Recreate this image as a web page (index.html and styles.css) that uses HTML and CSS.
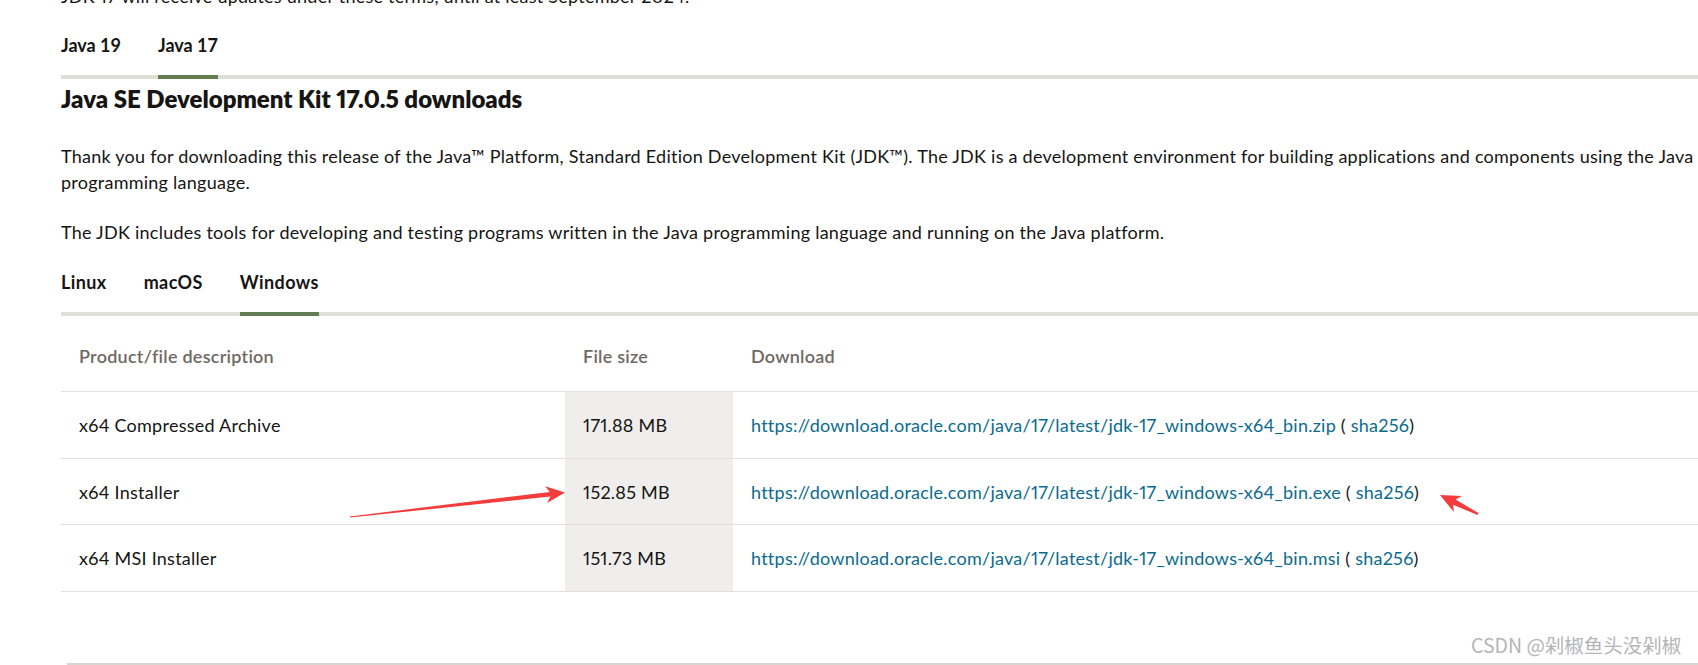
FILE: index.html
```html
<!DOCTYPE html>
<html lang="en">
<head>
<meta charset="utf-8">
<title>Java SE Development Kit 17.0.5 downloads</title>
<link rel="stylesheet" href="styles.css">
</head>
<body>
<main class="page">
  <p class="para cut">JDK 17 will receive updates under these terms, until at least September 2024.</p>
  <nav class="tabs tabs-version">
    <span class="tab">Java 19</span>
    <span class="tab active">Java 17</span>
  </nav>
  <h2 class="title">Java SE Development Kit 17.0.5 downloads</h2>
  <p class="para first">Thank you for downloading this release of the Java™ Platform, Standard Edition Development Kit (JDK™). The JDK is a development environment for building applications and components using the Java<br>programming language.</p>
  <p class="para second">The JDK includes tools for developing and testing programs written in the Java programming language and running on the Java platform.</p>
  <nav class="tabs tabs-os">
    <span class="tab">Linux</span>
    <span class="tab">macOS</span>
    <span class="tab active">Windows</span>
  </nav>
  <table class="dl">
    <colgroup>
      <col class="c-desc">
      <col class="c-size">
      <col class="c-link">
    </colgroup>
    <thead>
      <tr>
        <th>Product/file description</th>
        <th>File size</th>
        <th>Download</th>
      </tr>
    </thead>
    <tbody>
      <tr>
        <td>x64 Compressed Archive</td>
        <td class="size">171.88 MB</td>
        <td><a href="#">https://download.oracle.com/java/17/latest/jdk-17_windows-x64_bin.zip</a> ( <a href="#">sha256</a>)</td>
      </tr>
      <tr class="mid">
        <td>x64 Installer</td>
        <td class="size">152.85 MB</td>
        <td><a href="#">https://download.oracle.com/java/17/latest/jdk-17_windows-x64_bin.exe</a> ( <a href="#">sha256</a>)</td>
      </tr>
      <tr>
        <td>x64 MSI Installer</td>
        <td class="size">151.73 MB</td>
        <td><a href="#">https://download.oracle.com/java/17/latest/jdk-17_windows-x64_bin.msi</a> ( <a href="#">sha256</a>)</td>
      </tr>
    </tbody>
  </table>
  <div class="next-section"></div>
</main>
<svg class="annotations" width="1698" height="665" viewBox="0 0 1698 665" aria-hidden="true">
  <polygon fill="#f43c3c" points="349.9,516.4 549.84,491.9 545.1,486.2 565,492.5 547.1,503.1 550.36,496.5 350.1,517.6"/>
  <polygon fill="#f43c3c" points="1478.4,513.1 1455.6,499.5 1461.9,495.9 1440,495 1453.9,512 1453,504.8 1477.6,514.9"/>
</svg>
<div class="watermark">CSDN @剁椒鱼头没剁椒</div>
</body>
</html>
```

FILE: styles.css
```css
html, body {
  margin: 0;
  padding: 0;
}

body {
  width: 1698px;
  height: 665px;
  overflow: hidden;
  position: relative;
  background: #ffffff;
  color: #161513;
  font-family: Lato, "Noto Sans", sans-serif;
  font-size: 18px;
  font-variant-numeric: proportional-nums;
}

.page {
  padding-left: 61px;
  width: 1680px;
}

.para {
  margin: 0;
  font-size: 18px;
  line-height: 26px;
  letter-spacing: 0.25px;
  white-space: nowrap;
}

.cut {
  margin-top: -17px;
}

.first {
  margin-top: 28px;
}

.second {
  margin-top: 24px;
}

.tabs {
  display: flex;
  gap: 37px;
  border-bottom: 4px solid #e0ded9;
  width: 1637px;
}

.tabs-version {
  margin-top: 24px;
}

.tabs-os {
  margin-top: 25px;
}

.tab {
  font-weight: 700;
  font-size: 18px;
  line-height: 24px;
  letter-spacing: 0.4px;
  padding-bottom: 18px;
  margin-bottom: -4px;
  border-bottom: 4px solid transparent;
}

.tabs-version .tab {
  letter-spacing: 0;
  font-variant-numeric: tabular-nums;
}

.tab.active {
  border-bottom-color: #637d52;
}

.title {
  margin: 4px 0 0;
  font-size: 24px;
  line-height: 32px;
  font-weight: 800;
}

.dl {
  width: 1637px;
  border-collapse: collapse;
  table-layout: fixed;
  font-size: 18px;
  line-height: 26px;
  letter-spacing: 0.25px;
}

.c-desc {
  width: 504px;
}

.c-size {
  width: 168px;
}

.dl th {
  text-align: left;
  font-weight: 600;
  color: #6f6964;
  padding: 27px 18px 22px;
  height: 26px;
}

.dl td {
  padding: 0 18px;
  height: 66px;
  vertical-align: middle;
  border-top: 1px solid #e1dfdc;
  white-space: nowrap;
}

.dl tbody tr:last-child td {
  border-bottom: 1px solid #e1dfdc;
}

.dl tr.mid td {
  height: 65px;
}

.dl td.size {
  background: #efeeec;
}

.dl a {
  color: #0b6b8e;
  text-decoration: none;
}

.next-section {
  margin: 71px 0 0 6px;
  border-top: 2px solid #d8d5d1;
  width: 1640px;
}

.annotations {
  position: absolute;
  left: 0;
  top: 0;
  pointer-events: none;
}

.watermark {
  position: absolute;
  left: 1471px;
  top: 632px;
  font-family: "Noto Sans CJK SC", "Noto Sans", sans-serif;
  font-size: 19.5px;
  line-height: 26px;
  color: #b5b5b5;
  white-space: nowrap;
}
```
